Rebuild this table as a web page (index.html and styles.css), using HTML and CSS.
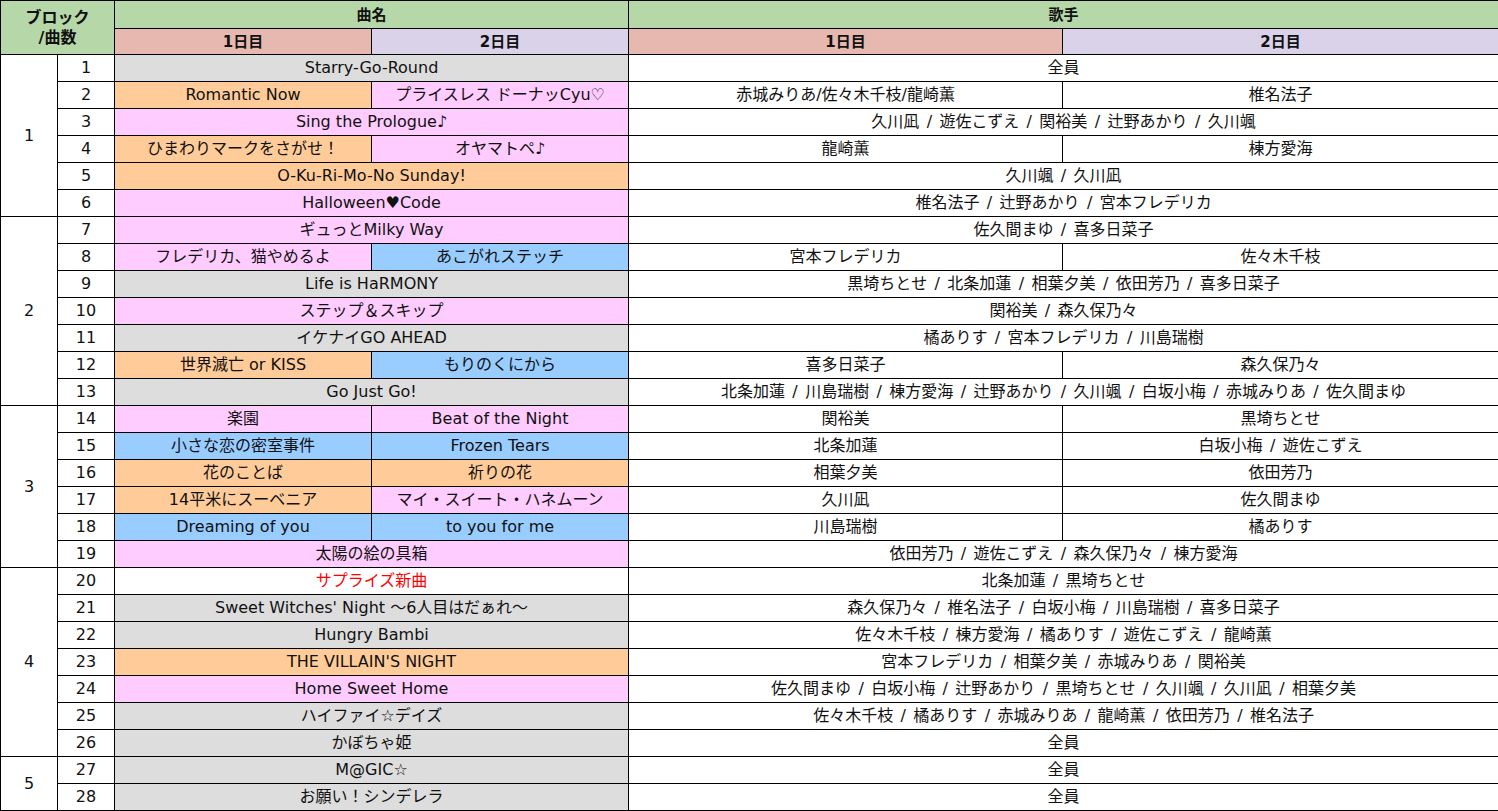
FILE: index.html
```html
<!DOCTYPE html>
<html lang="ja">
<head>
<meta charset="utf-8">
<link rel="stylesheet" href="styles.css">
</head>
<body>
<table class="setlist">
<colgroup>
<col class="c-block"><col class="c-no"><col class="c-song"><col class="c-song"><col class="c-singer1"><col class="c-singer2">
</colgroup>
<thead>
<tr class="h1">
<th rowspan="2" colspan="2" class="green block-head">ブロック<br>/曲数</th>
<th colspan="2" class="green">曲名</th>
<th colspan="2" class="green">歌手</th>
</tr>
<tr class="h2">
<th class="red">1日目</th><th class="lav">2日目</th>
<th class="red">1日目</th><th class="lav">2日目</th>
</tr>
</thead>
<tbody>
<tr><td rowspan="6">1</td><td>1</td><td colspan="2" class="gray">Starry-Go-Round</td><td colspan="2" class="sg">全員</td></tr>
<tr><td>2</td><td class="orange">Romantic Now</td><td class="pink">プライスレス ドーナッCyu♡</td><td class="sg">赤城みりあ/佐々木千枝/龍崎薫</td><td class="sg">椎名法子</td></tr>
<tr><td>3</td><td colspan="2" class="pink">Sing the Prologue♪</td><td colspan="2" class="sg">久川凪 / 遊佐こずえ / 関裕美 / 辻野あかり / 久川颯</td></tr>
<tr><td>4</td><td class="orange">ひまわりマークをさがせ！</td><td class="pink">オヤマトペ♪</td><td class="sg">龍崎薫</td><td class="sg">棟方愛海</td></tr>
<tr><td>5</td><td colspan="2" class="orange">O-Ku-Ri-Mo-No Sunday!</td><td colspan="2" class="sg">久川颯 / 久川凪</td></tr>
<tr><td>6</td><td colspan="2" class="pink">Halloween♥Code</td><td colspan="2" class="sg">椎名法子 / 辻野あかり / 宮本フレデリカ</td></tr>
<tr><td rowspan="7">2</td><td>7</td><td colspan="2" class="pink">ギュっとMilky Way</td><td colspan="2" class="sg">佐久間まゆ / 喜多日菜子</td></tr>
<tr><td>8</td><td class="pink">フレデリカ、猫やめるよ</td><td class="blue">あこがれステッチ</td><td class="sg">宮本フレデリカ</td><td class="sg">佐々木千枝</td></tr>
<tr><td>9</td><td colspan="2" class="gray">Life is HaRMONY</td><td colspan="2" class="sg">黒埼ちとせ / 北条加蓮 / 相葉夕美 / 依田芳乃 / 喜多日菜子</td></tr>
<tr><td>10</td><td colspan="2" class="pink">ステップ＆スキップ</td><td colspan="2" class="sg">関裕美 / 森久保乃々</td></tr>
<tr><td>11</td><td colspan="2" class="gray">イケナイGO AHEAD</td><td colspan="2" class="sg">橘ありす / 宮本フレデリカ / 川島瑞樹</td></tr>
<tr><td>12</td><td class="orange">世界滅亡 or KISS</td><td class="blue">もりのくにから</td><td class="sg">喜多日菜子</td><td class="sg">森久保乃々</td></tr>
<tr><td>13</td><td colspan="2" class="gray">Go Just Go!</td><td colspan="2" class="sg">北条加蓮 / 川島瑞樹 / 棟方愛海 / 辻野あかり / 久川颯 / 白坂小梅 / 赤城みりあ / 佐久間まゆ</td></tr>
<tr><td rowspan="6">3</td><td>14</td><td class="pink">楽園</td><td class="pink">Beat of the Night</td><td class="sg">関裕美</td><td class="sg">黒埼ちとせ</td></tr>
<tr><td>15</td><td class="blue">小さな恋の密室事件</td><td class="blue">Frozen Tears</td><td class="sg">北条加蓮</td><td class="sg">白坂小梅 / 遊佐こずえ</td></tr>
<tr><td>16</td><td class="orange">花のことば</td><td class="orange">祈りの花</td><td class="sg">相葉夕美</td><td class="sg">依田芳乃</td></tr>
<tr><td>17</td><td class="orange">14平米にスーベニア</td><td class="pink">マイ・スイート・ハネムーン</td><td class="sg">久川凪</td><td class="sg">佐久間まゆ</td></tr>
<tr><td>18</td><td class="blue">Dreaming of you</td><td class="blue">to you for me</td><td class="sg">川島瑞樹</td><td class="sg">橘ありす</td></tr>
<tr><td>19</td><td colspan="2" class="pink">太陽の絵の具箱</td><td colspan="2" class="sg">依田芳乃 / 遊佐こずえ / 森久保乃々 / 棟方愛海</td></tr>
<tr><td rowspan="7">4</td><td>20</td><td colspan="2" class="surprise">サプライズ新曲</td><td colspan="2" class="sg">北条加蓮 / 黒埼ちとせ</td></tr>
<tr><td>21</td><td colspan="2" class="gray">Sweet Witches' Night ～6人目はだぁれ～</td><td colspan="2" class="sg">森久保乃々 / 椎名法子 / 白坂小梅 / 川島瑞樹 / 喜多日菜子</td></tr>
<tr><td>22</td><td colspan="2" class="gray">Hungry Bambi</td><td colspan="2" class="sg">佐々木千枝 / 棟方愛海 / 橘ありす / 遊佐こずえ / 龍崎薫</td></tr>
<tr><td>23</td><td colspan="2" class="orange">THE VILLAIN'S NIGHT</td><td colspan="2" class="sg">宮本フレデリカ / 相葉夕美 / 赤城みりあ / 関裕美</td></tr>
<tr><td>24</td><td colspan="2" class="pink">Home Sweet Home</td><td colspan="2" class="sg">佐久間まゆ / 白坂小梅 / 辻野あかり / 黒埼ちとせ / 久川颯 / 久川凪 / 相葉夕美</td></tr>
<tr><td>25</td><td colspan="2" class="gray">ハイファイ☆デイズ</td><td colspan="2" class="sg">佐々木千枝 / 橘ありす / 赤城みりあ / 龍崎薫 / 依田芳乃 / 椎名法子</td></tr>
<tr><td>26</td><td colspan="2" class="gray">かぼちゃ姫</td><td colspan="2" class="sg">全員</td></tr>
<tr><td rowspan="2">5</td><td>27</td><td colspan="2" class="gray">M@GIC☆</td><td colspan="2" class="sg">全員</td></tr>
<tr><td>28</td><td colspan="2" class="gray">お願い！シンデレラ</td><td colspan="2" class="sg">全員</td></tr>
</tbody>
</table>
</body>
</html>
```
FILE: styles.css
```css
html, body {
  margin: 0;
  padding: 0;
  background: #ffffff;
}
.setlist {
  border-collapse: collapse;
  table-layout: fixed;
  width: 1498px;
  font-family: "DejaVu Sans", "Noto Sans CJK JP", sans-serif;
  font-size: 16px;
  color: #111;
}
.c-block { width: 57px; }
.c-no { width: 57px; }
.c-song { width: 257px; }
.c-singer1 { width: 434px; }
.c-singer2 { width: 436px; }
.setlist th,
.setlist td {
  border: 1px solid #000;
  padding: 0;
  text-align: center;
  vertical-align: middle;
  white-space: nowrap;
  overflow: hidden;
  line-height: 18px;
}
.setlist th { font-weight: bold; font-size: 15px; }
.setlist th.block-head { font-size: 16px; line-height: 20px; }
.h1 th { height: 27px; }
.h2 th { height: 25px; }
.setlist tbody tr { height: 27px; }
.sg { word-spacing: 2.3px; }
.green { background: #b6d7a8; }
.red { background: #e6b8af; }
.lav { background: #d9d2e9; }
.gray { background: #dddddd; }
.orange { background: #ffcc99; }
.pink { background: #ffccff; }
.blue { background: #99ccff; }
.surprise { background: #fff; color: #ff0000; }
```
